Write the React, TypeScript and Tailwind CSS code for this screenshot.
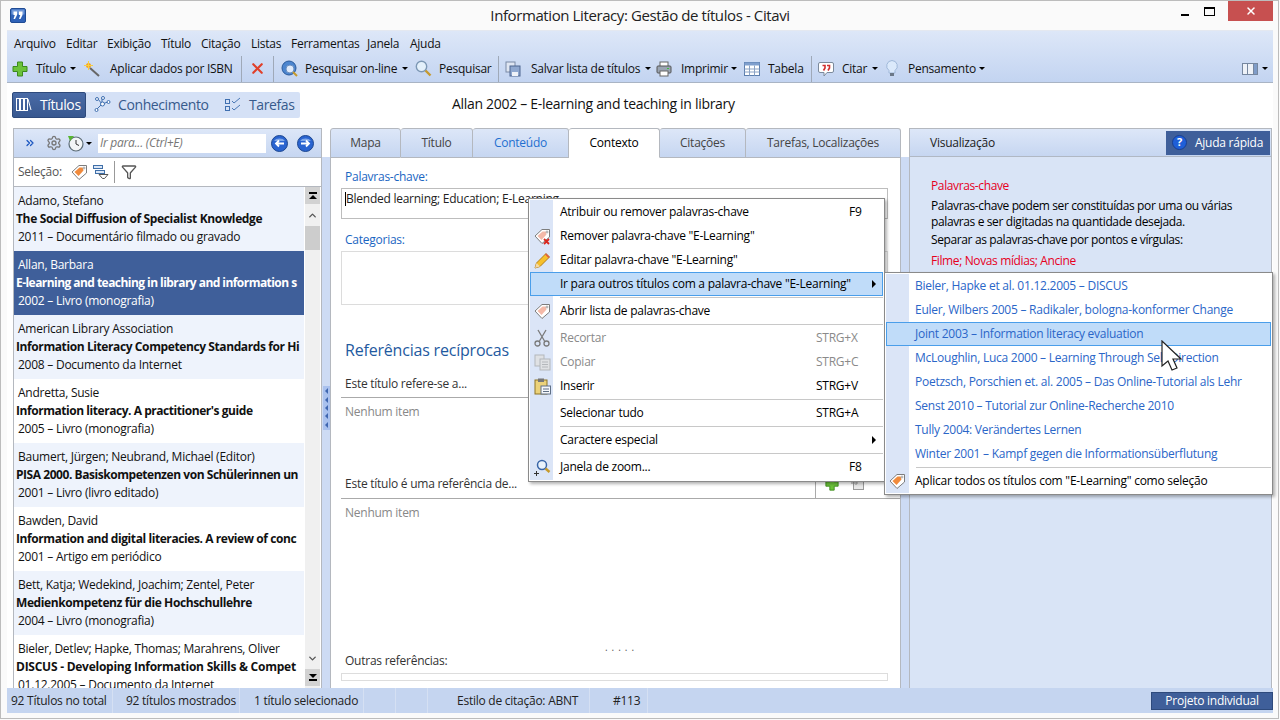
import { ChevronDown, ChevronUp, ChevronsRight, Settings, Filter, X } from 'lucide-react';

const font = '[font-family:"Open_Sans","Liberation_Sans",sans-serif]';

function Arrow() {
  return <span className="block w-0 h-0 border-l-[3px] border-r-[3px] border-t-[3px] border-l-transparent border-r-transparent border-t-black" />;
}

function PlusIcon({ size = 16 }: { size?: number }) {
  return (
    <svg width={size} height={size} viewBox="0 0 16 16">
      <path d="M5.5 1h5v4.5H15v5h-4.5V15h-5v-4.5H1v-5h4.500z" fill="#6cc23a" stroke="#3c8a1c" />
    </svg>
  );
}

function Wand() {
  return (
    <svg width="16" height="16" viewBox="0 0 16 16">
      <path d="M6 7l9 8" stroke="#666" strokeWidth="2" />
      <circle cx="4.500" cy="4.500" r="2.500" fill="#f7a020" />
      <path d="M4.500 0v9M0 4.500h9" stroke="#f8d040" />
    </svg>
  );
}

function Globe() {
  return (
    <svg width="17" height="17" viewBox="0 0 17 17">
      <circle cx="8" cy="8" r="7" fill="#4d86cf" stroke="#2a5a9c" />
      <circle cx="9" cy="9" r="4" fill="#dfeafa" stroke="#6b8fbf" />
      <path d="M12 12l4 4" stroke="#c79a2a" strokeWidth="2" />
    </svg>
  );
}

function Magnifier() {
  return (
    <svg width="17" height="17" viewBox="0 0 17 17">
      <circle cx="6.500" cy="6.500" r="5.200" fill="#e3f0fb" stroke="#7d98b5" strokeWidth="1.400" />
      <path d="M10.500 10.500l5 5" stroke="#c69a30" strokeWidth="2.400" />
    </svg>
  );
}

function SaveIcon() {
  return (
    <svg width="16" height="16" viewBox="0 0 16 16">
      <rect x="1" y="1" width="9" height="10" fill="#dfe6f2" stroke="#7a8aa5" />
      <rect x="5" y="5" width="10" height="10" fill="#8fa8d0" stroke="#4e6690" />
      <rect x="7" y="11" width="6" height="4" fill="#eef2f8" />
    </svg>
  );
}

function PrintIcon() {
  return (
    <svg width="16" height="16" viewBox="0 0 16 16">
      <rect x="4" y="1" width="8" height="5" fill="#fff" stroke="#666" />
      <rect x="1" y="5" width="14" height="7" rx="1" fill="#9aa5b3" stroke="#555" />
      <rect x="4" y="10" width="8" height="5" fill="#fff" stroke="#666" />
      <rect x="11" y="7" width="2" height="1" fill="#3fbf3f" />
    </svg>
  );
}

function TableIcon() {
  return (
    <svg width="16" height="16" viewBox="0 0 16 16">
      <rect x="0.500" y="1.500" width="15" height="13" fill="#fff" stroke="#5d7fae" />
      <rect x="0.500" y="1.500" width="15" height="3" fill="#7f9fcd" />
      <path d="M5.500 4.500v10M10.500 4.500v10M.5 8h15M.5 11h15" stroke="#8aa2c4" />
    </svg>
  );
}

function QuoteIcon() {
  return (
    <svg width="16" height="16" viewBox="0 0 16 16">
      <path d="M2 1.500h12a1.500 1.500 0 0 1 1.500 1.500v7a1.500 1.500 0 0 1-1.500 1.500H9L6 15v-3.500H2A1.500 1.500 0 0 1 .5 10V3A1.500 1.500 0 0 1 2 1.500z" fill="#fff" stroke="#7c8a9c" />
      <path d="M4.500 4.500h2.500v2.500L5.500 9.500M9 4.500h2.500v2.500L10 9.500" fill="none" stroke="#d12f2f" strokeWidth="1.600" />
    </svg>
  );
}

function Bulb() {
  return (
    <svg width="12" height="17" viewBox="0 0 12 17">
      <path d="M6 .5a5.500 5.500 0 0 1 3 10v2.500H3v-2.500A5.500 5.500 0 0 1 6 .5z" fill="#dbe9fb" stroke="#9fb7d8" />
      <rect x="4" y="13" width="4" height="3" fill="#6c7888" />
    </svg>
  );
}

function TagIcon({ badge }: { badge?: 'x' | 'arrow' }) {
  return (
    <svg width="17" height="17" viewBox="0 0 17 17">
      <path d="M1 8l7-6.500h7.500v7.500L8 15.500z" fill="#fff" stroke="#7d7d7d" />
      <path d="M3.500 8l5-4.500h3l1 3-5 5.500z" fill={badge === 'arrow' ? '#f08a3c' : '#f4b9a8'} />
      <circle cx="13" cy="4" r="1" fill="#fff" stroke="#777" strokeWidth="0.600" />
      {badge === 'x' && <path d="M10 11l5 5M15 11l-5 5" stroke="#d9261c" strokeWidth="1.800" />}
    </svg>
  );
}

function Pencil() {
  return (
    <svg width="17" height="17" viewBox="0 0 17 17">
      <path d="M1 16l1.500-5L12 1.500 15.500 5 6 14.500z" fill="#f6c02c" stroke="#b57d14" />
      <path d="M1 16l1.500-5 3.500 3.500z" fill="#f3d9a8" />
      <path d="M11 2.500L14.500 6l1-1-3.500-3.500z" fill="#e0574a" />
    </svg>
  );
}

function Scissors() {
  return (
    <svg width="16" height="18" viewBox="0 0 16 18" fill="none" stroke="#7a7a7a" strokeWidth="1.300">
      <path d="M4 1l6.500 11M12 1L5.500 12" />
      <circle cx="3.500" cy="14.500" r="2.500" />
      <circle cx="12.500" cy="14.500" r="2.500" />
    </svg>
  );
}

function CopyIcon() {
  return (
    <svg width="17" height="17" viewBox="0 0 17 17" fill="#dfe1e4" stroke="#b4b7bb">
      <rect x="1" y="1" width="9" height="11" />
      <rect x="6" y="5" width="10" height="11" />
      <path d="M8 8h6M8 10.500h6M8 13h6" fill="none" />
    </svg>
  );
}

function PasteIcon() {
  return (
    <svg width="17" height="17" viewBox="0 0 17 17">
      <rect x="1" y="2" width="12" height="14" fill="#ecd27a" stroke="#8e7425" />
      <rect x="4" y="0.500" width="6" height="3.500" fill="#777" />
      <rect x="7" y="8" width="9.500" height="8" fill="#f5f7fa" stroke="#5f6f85" />
      <path d="M9 11h6M9 13.500h6" stroke="#5f6f85" />
    </svg>
  );
}

function ZoomIcon() {
  return (
    <svg width="17" height="17" viewBox="0 0 17 17">
      <circle cx="8" cy="6" r="4.500" fill="#eaf3fc" stroke="#3a66a8" strokeWidth="1.500" />
      <path d="M11.500 9.500l4 3.500" stroke="#c79a2a" strokeWidth="2.400" />
      <path d="M0 14.500h5M2.500 12v5" stroke="#333" />
    </svg>
  );
}

function NavCircle({ dir }: { dir: 'left' | 'right' }) {
  return (
    <svg width="17" height="17" viewBox="0 0 17 17">
      <circle cx="8.500" cy="8.500" r="8" fill="#2a64d0" stroke="#1d478f" />
      <path d="M3 6a6 4 0 0 1 11 0z" fill="#7fa8ea" />
      <path d={dir === 'left' ? 'M13 8.500H5M8 5.500l-3 3 3 3' : 'M4 8.500h8M9 5.500l3 3-3 3'} fill="none" stroke="#fff" strokeWidth="1.800" />
    </svg>
  );
}

function ClockIcon() {
  return (
    <svg width="17" height="17" viewBox="0 0 17 17">
      <circle cx="9" cy="9" r="7" fill="#f2f5f7" stroke="#5c6c76" strokeWidth="1.200" />
      <path d="M9 5v4l3 1.500" fill="none" stroke="#333" />
      <path d="M1 1h6L3 6z" fill="#57b530" />
    </svg>
  );
}

function BooksIcon() {
  return (
    <svg width="16" height="15" viewBox="0 0 16 15" fill="none" stroke="#fff">
      <rect x="0.500" y="1.500" width="3" height="12" />
      <rect x="4.500" y="1.500" width="3" height="12" />
      <rect x="8.500" y="1.500" width="3" height="12" />
      <path d="M12 2l3 11" />
    </svg>
  );
}

function KnowledgeIcon() {
  return (
    <svg width="17" height="17" viewBox="0 0 17 17" fill="#fff" stroke="#3f6fb0">
      <path d="M3 13l5-5M8 8l-4-5M8 8l6-2M8 2l0 6" fill="none" />
      <circle cx="8.500" cy="8" r="2" />
      <circle cx="2.500" cy="14" r="1.500" />
      <circle cx="3" cy="3" r="1.500" />
      <circle cx="14.500" cy="6" r="1.500" />
      <circle cx="9" cy="2" r="1.500" />
    </svg>
  );
}

function TasksIcon() {
  return (
    <svg width="17" height="15" viewBox="0 0 17 15" fill="none" stroke="#3f6fb0">
      <rect x="0.500" y="2.500" width="4" height="4" />
      <rect x="0.500" y="9.500" width="4" height="4" />
      <path d="M7 4l2 2 6-5M7 11l2 2 6-5" stroke="#4a78b5" />
    </svg>
  );
}

function AppLogo() {
  return (
    <svg width="16" height="15" viewBox="0 0 16 15">
      <rect x="0.500" y="0.500" width="15" height="14" rx="1.500" fill="#2f62b8" stroke="#1f4b94" />
      <rect x="1.500" y="1.500" width="13" height="5" fill="#6f97d8" />
      <path d="M3.500 3.500h3.500v3.500L5 11H3.500L4.800 7H3.500zM9 3.500h3.500v3.500L10.500 11H9l1.300-4H9z" fill="#fff" />
    </svg>
  );
}

type Tool = { icon: React.ReactNode; box: string; slot: string; label: string; labelBox: string; arrow?: boolean };

const tools: (Tool | 'sep')[] = [
  { icon: <PlusIcon />, box: 'w-[77px] pl-[5px]', slot: 'w-[24px]', label: 'Título', labelBox: 'w-[34px]', arrow: true },
  { icon: <Wand />, box: 'w-[157px]', slot: 'w-[26px]', label: 'Aplicar dados por ISBN', labelBox: 'w-[125px]' },
  'sep',
  { icon: <X className="w-[17px] h-[17px] text-[#e0402a]" strokeWidth={3} />, box: 'w-[31px] pl-[7px]', slot: 'w-[17px]', label: '', labelBox: 'w-0' },
  'sep',
  { icon: <Globe />, box: 'w-[141px] pl-[7px]', slot: 'w-[24px]', label: 'Pesquisar on-line', labelBox: 'w-[97px]', arrow: true },
  { icon: <Magnifier />, box: 'w-[83px]', slot: 'w-[24px]', label: 'Pesquisar', labelBox: 'w-[55px]' },
  'sep',
  { icon: <SaveIcon />, box: 'w-[157px] pl-[6px]', slot: 'w-[26px]', label: 'Salvar lista de títulos', labelBox: 'w-[114px]', arrow: true },
  { icon: <PrintIcon />, box: 'w-[88px]', slot: 'w-[25px]', label: 'Imprimir', labelBox: 'w-[50px]', arrow: true },
  { icon: <TableIcon />, box: 'w-[67px]', slot: 'w-[24px]', label: 'Tabela', labelBox: 'w-[38px]' },
  'sep',
  { icon: <QuoteIcon />, box: 'w-[74px] pl-[6px]', slot: 'w-[24px]', label: 'Citar', labelBox: 'w-[30px]', arrow: true },
  { icon: <Bulb />, box: 'w-[105px]', slot: 'w-[22px]', label: 'Pensamento', labelBox: 'w-[71px]', arrow: true },
];

const menus = [
  ['Arquivo', 'w-[52px]'],
  ['Editar', 'w-[41px]'],
  ['Exibição', 'w-[54px]'],
  ['Título', 'w-[40px]'],
  ['Citação', 'w-[50px]'],
  ['Listas', 'w-[40px]'],
  ['Ferramentas', 'w-[76px]'],
  ['Janela', 'w-[43px]'],
  ['Ajuda', 'w-[40px]'],
];

// the list cuts long titles at the column edge, so the strings stop where the picture stops
const refs = [
  ['Adamo, Stefano', 'The Social Diffusion of Specialist Knowledge', '2011 – Documentário filmado ou gravado', 'bg-[#eef3fc]', 'tracking-[-0.35px]'],
  ['Allan, Barbara', 'E-learning and teaching in library and information s', '2002 – Livro (monografia)', 'bg-[#3f5f9a] text-white', 'tracking-[-0.55px]'],
  ['American Library Association', 'Information Literacy Competency Standards for Hi', '2008 – Documento da Internet', 'bg-[#eef3fc]', 'tracking-[-0.4px]'],
  ['Andretta, Susie', "Information literacy. A practitioner's guide", '2005 – Livro (monografia)', 'bg-white', 'tracking-[-0.45px]'],
  ['Baumert, Jürgen; Neubrand, Michael (Editor)', 'PISA 2000. Basiskompetenzen von Schülerinnen un', '2001 – Livro (livro editado)', 'bg-[#eef3fc]', 'tracking-[-0.45px]'],
  ['Bawden, David', 'Information and digital literacies. A review of conc', '2001 – Artigo em periódico', 'bg-white', 'tracking-[-0.42px]'],
  ['Bett, Katja; Wedekind, Joachim; Zentel, Peter', 'Medienkompetenz für die Hochschullehre', '2004 – Livro (monografia)', 'bg-[#eef3fc]', 'tracking-[-0.4px]'],
  ['Bieler, Detlev; Hapke, Thomas; Marahrens, Oliver', 'DISCUS - Developing Information Skills & Compet', '01.12.2005 – Documento da Internet', 'bg-white', 'tracking-[-0.25px]'],
];

const tabs = [
  ['Mapa', 'w-[71px] text-[#444]'],
  ['Título', 'w-[72px] text-[#444]'],
  ['Conteúdo', 'w-[96px] text-[#1f6fd0]'],
  ['Contexto', 'w-[91px] bg-white bg-none border-b-white text-black'],
  ['Citações', 'w-[86px] text-[#444]'],
  ['Tarefas, Localizações', 'w-[155px] text-[#444]'],
];

const subItems = [
  'Bieler, Hapke et al. 01.12.2005 – DISCUS',
  'Euler, Wilbers 2005 – Radikaler, bologna-konformer Change',
  'Joint 2003 – Information literacy evaluation',
  'McLoughlin, Luca 2000 – Learning Through Self-Direction',
  'Poetzsch, Porschien et. al. 2005 – Das Online-Tutorial als Lehr',
  'Senst 2010 – Tutorial zur Online-Recherche 2010',
  'Tully 2004: Verändertes Lernen',
  'Winter 2001 – Kampf gegen die Informationsüberflutung',
];

function MenuRow({ icon, label, keys, muted, active, submenu }: { icon?: React.ReactNode; label: string; keys?: string; muted?: boolean; active?: boolean; submenu?: boolean }) {
  return (
    <div className={`relative flex items-center h-[24px] ${muted ? 'text-[#8a8a8a]' : 'text-black'}`}>
      {active && <div className="absolute left-0 right-0 top-0 bottom-0 bg-[#c0dcf9] border border-[#4a9eea]" />}
      <div className="relative w-[22px] ml-[1px] h-full flex items-center justify-center shrink-0">{icon}</div>
      <span className="relative ml-[7px] grow">{label}</span>
      {keys && <span className={`relative w-[71px] shrink-0 ${keys.length > 2 ? 'pl-[4px]' : 'pl-[37px]'}`}>{keys}</span>}
      {submenu && <span className="relative mr-[7px] block w-0 h-0 border-t-[4px] border-b-[4px] border-l-[4px] border-t-transparent border-b-transparent border-l-black" />}
    </div>
  );
}

function MenuSep() {
  return (
    <div className="h-[3px] flex items-center">
      <div className="ml-[30px] grow h-px bg-[#c8c8c8]" />
    </div>
  );
}

export default function App() {
  return (
    <div className="w-[1280px] h-[720px] bg-[#fafafa] overflow-hidden">
      <div className={`${font} relative w-[1279px] h-[719px] overflow-hidden bg-[#fafafa] text-[12px] tracking-[-0.25px] text-[#111] flex flex-col border border-[#bcbcbc]`}>
        {/* title bar */}
        <div className="h-[29px] shrink-0 flex items-start">
          <div className="ml-[9px] mt-[7px]"><AppLogo /></div>
          <div className="grow text-center text-[15px] tracking-[-0.4px] mt-[3px] ml-[86px] text-[#222]">Information Literacy: Gestão de títulos - Citavi</div>
          <div className="w-[33px] h-[20px] flex items-center justify-center"><div className="w-[8px] h-[2px] mt-[7px] bg-black" /></div>
          <div className="w-[27px] h-[20px] flex items-center"><div className="w-[11px] h-[9px] ml-[3px] border border-black border-t-2" /></div>
          <div className="w-[45px] h-[20px] bg-[#c75050] flex items-center justify-center"><X className="w-[12px] h-[12px] text-white" strokeWidth={3} /></div>
          <div className="w-[5px] h-full" />
        </div>

        <div className="ml-[6px] w-[1266px] flex flex-col">
          {/* menu and toolbar */}
          <div className="h-[53px] shrink-0 bg-gradient-to-b from-[#dde7f8] to-[#c3d4f1] border-b border-[#a9b4c4] border-t border-t-[#e4e8f0] flex flex-col">
            <div className="h-[24px] flex items-center pl-[7px] pt-[1px]">
              {menus.map(([name, w]) => (
                <span key={name} className={`${w} shrink-0`}>{name}</span>
              ))}
            </div>
            <div className="h-[27px] flex items-center">
              {tools.map((t, i) =>
                t === 'sep' ? (
                  <div key={i} className="w-px h-[26px] bg-[#9fa9b8] shrink-0" />
                ) : (
                  <div key={i} className={`${t.box} shrink-0 flex items-center`}>
                    <div className={`${t.slot} shrink-0`}>{t.icon}</div>
                    <span className={`${t.labelBox} shrink-0 whitespace-nowrap pt-[1px]`}>{t.label}</span>
                    {t.arrow && <Arrow />}
                  </div>
                ),
              )}
              <div className="ml-auto flex items-center gap-[4px] pr-[5px]">
                <svg width="16" height="12" viewBox="0 0 16 12" fill="#eef2f8" stroke="#76879f">
                  <rect x="0.500" y="0.500" width="15" height="11" />
                  <path d="M5.500 0v12M11.500 0v12" />
                  <rect x="11.500" y="0.500" width="4" height="11" fill="#7f9cc8" />
                </svg>
                <Arrow />
              </div>
            </div>
          </div>

          {/* view switcher */}
          <div className="h-[45px] shrink-0 bg-white flex items-center pl-[5px] pb-[2px]">
            <div className="w-[288px] h-[26px] bg-[#d5e1f6] rounded-[2px] flex items-center text-[14px] leading-[20px] tracking-[-0.4px] text-[#375a8c]">
              <div className="w-[74px] h-full bg-gradient-to-b from-[#4a6ba6] to-[#385890] rounded-[2px] border border-[#2e4a7c] text-white flex items-center pl-[3px] gap-[8px]">
                <BooksIcon />
                <span>Títulos</span>
              </div>
              <div className="ml-[8px] w-[131px] flex items-center gap-[7px]"><KnowledgeIcon /><span>Conhecimento</span></div>
              <div className="flex items-center gap-[7px]"><TasksIcon /><span>Tarefas</span></div>
            </div>
            <div className="ml-[152px] mb-[1px] text-[14px] leading-[20px] tracking-[-0.3px] text-[#111]">Allan 2002 – E-learning and teaching in library</div>
          </div>

          {/* panels */}
          <div className="flex shrink-0 bg-white pl-[6px] h-[560px]">
            {/* left panel */}
            <div className="w-[309px] shrink-0 flex flex-col border border-[#b4b8bf] border-b-0 overflow-hidden">
              <div className="h-[29px] shrink-0 bg-gradient-to-b from-[#dde7f8] to-[#c6d6f1] border-b border-[#b0b8c4] flex items-center pl-[10px]">
                <ChevronsRight className="w-[12px] h-[12px] text-[#1c57c0]" strokeWidth={2.5} />
                <Settings className="ml-[10px] w-[16px] h-[16px] text-[#777]" />
                <span className="ml-[5px]"><ClockIcon /></span>
                <span className="ml-[2px]"><Arrow /></span>
                <div className="ml-[6px] w-[168px] h-[19px] bg-white flex items-center pl-[2px] text-[#777] italic">Ir para... (Ctrl+E)</div>
                <span className="ml-[5px]"><NavCircle dir="left" /></span>
                <span className="ml-[9px]"><NavCircle dir="right" /></span>
              </div>
              <div className="h-[29px] shrink-0 bg-white border-b border-[#b4b8bf] flex items-center pl-[4px] text-[#555]">
                <span className="w-[53px]">Seleção:</span>
                <TagIcon badge="arrow" />
                <span className="ml-[5px]">
                  <svg width="16" height="16" viewBox="0 0 16 16" fill="#dbe7f7" stroke="#3f6fa8">
                    <rect x="0.500" y="1.500" width="9" height="3" />
                    <rect x="2.500" y="6.500" width="9" height="3" />
                    <path d="M6 10.500h9l-3.500 4h-2z" fill="#fff" stroke="#555" />
                  </svg>
                </span>
                <div className="ml-[5px] w-px h-[22px] bg-[#999]" />
                <Filter className="ml-[6px] w-[16px] h-[16px] text-[#555]" />
              </div>
              <div className="flex grow min-h-0">
                <div className="w-[290px] shrink-0 overflow-hidden">
                  {refs.map(([author, title, meta, cls, track]) => (
                    <div key={author} className={`${cls} h-[64px] pt-[5px] leading-[18px] whitespace-nowrap overflow-hidden`}>
                      <div className="pl-[4px]">{author}</div>
                      <div className={`pl-[2px] font-bold ${track}`}>{title}</div>
                      <div className="pl-[4px]">{meta}</div>
                    </div>
                  ))}
                </div>
                <div className="w-[15px] ml-[1px] shrink-0 bg-[#f0f0f0] flex flex-col items-center">
                  <div className="w-full h-[17px] bg-[#d2d2d2] flex flex-col items-center justify-center gap-[1px]">
                    <div className="w-[8px] h-[2px] bg-black" />
                    <div className="w-0 h-0 border-l-[4px] border-r-[4px] border-b-[4px] border-l-transparent border-r-transparent border-b-black" />
                  </div>
                  <div className="h-[22px] flex items-center"><ChevronUp className="w-[11px] h-[11px] text-[#555]" strokeWidth={3} /></div>
                  <div className="w-full h-[24px] bg-[#cdcdcd]" />
                  <div className="mt-auto h-[21px] flex items-center"><ChevronDown className="w-[11px] h-[11px] text-[#555]" strokeWidth={3} /></div>
                  <div className="w-full h-[17px] bg-[#d2d2d2] flex flex-col items-center justify-center gap-[1px] mb-[2px]">
                    <div className="w-0 h-0 border-l-[4px] border-r-[4px] border-t-[4px] border-l-transparent border-r-transparent border-t-black" />
                    <div className="w-[8px] h-[2px] bg-black" />
                  </div>
                </div>
              </div>
            </div>

            {/* splitter */}
            <div className="w-[8px] mt-[29px] shrink-0 bg-[#cddbf4] flex flex-col items-center">
              <div className="mt-[229px] w-[7px] h-[44px] bg-[#a9c1ee] flex flex-col items-center justify-around py-[1px]">
                {[0, 1, 2, 3, 4].map((n) => (
                  <div key={n} className="w-0 h-0 border-t-[3px] border-b-[3px] border-r-[3px] border-t-transparent border-b-transparent border-r-[#3f66b0]" />
                ))}
              </div>
            </div>

            {/* main panel */}
            <div className="w-[571px] shrink-0 flex flex-col">
              <div className="h-[29px] shrink-0 flex">
                {tabs.map(([name, cls]) => (
                  <div key={name} className={`${cls} h-[30px] shrink-0 flex items-center justify-center bg-gradient-to-b from-[#dde7f8] to-[#c6d6f1] border border-l-0 first:border-l border-[#b4b8bf] rounded-t-[3px] z-10`}>{name}</div>
                ))}
              </div>
              <div className="grow bg-white border-x border-[#b4b8bf] relative flex flex-col pl-[10px] pr-[12px] min-h-0">
                <div className="pl-[4px] mt-[11px] h-[20px] text-[#1a66c2]">Palavras-chave:</div>
                <div className="h-[31px] border border-[#bdbdbd] flex items-start pt-[1px] pl-[3px] text-[#222]">
                  <span className="w-px h-[14px] mt-[2px] bg-black" />
                  Blended learning; Education; E-Learning
                </div>
                <div className="pl-[4px] mt-[12px] h-[20px] text-[#1a66c2]">Categorias:</div>
                <div className="h-[54px] border border-[#dcdcdc]" />
                <div className="pl-[4px] mt-[33px] h-[24px] text-[16px] leading-[24px] tracking-[-0.2px] text-[#1f5aa0]">Referências recíprocas</div>
                <div className="pl-[4px] mt-[13px] h-[23px] text-[#333] border-b border-[#aaa] -mr-[12px]">Este título refere-se a...</div>
                <div className="pl-[4px] mt-[5px] h-[72px] text-[#888]">Nenhum item</div>
                <div className="flex h-[24px] border-b border-[#aaa] text-[#333] -mr-[12px]">
                  <div className="pl-[4px] w-[475px] border-r border-[#aaa]">Este título é uma referência de...</div>
                  <span className="ml-[9px] mt-[2px]"><PlusIcon size={14} /></span>
                  <span className="ml-[12px] mt-[2px]">
                    <svg width="14" height="14" viewBox="0 0 14 14" fill="#e8e8e8" stroke="#9a9a9a">
                      <rect x="2.500" y="1.500" width="10" height="11" />
                      <path d="M0 6h6M4.500 4l2 2-2 2" fill="none" />
                    </svg>
                  </span>
                </div>
                <div className="pl-[4px] mt-[5px] text-[#888]">Nenhum item</div>
                <div className="mt-auto text-center text-[10px] leading-[10px] tracking-[4px] text-[#555] pl-[14px]">.....</div>
                <div className="pl-[4px] h-[20px] text-[#333]">Outras referências:</div>
                <div className="h-[8px] mt-[1px] mb-[7px] border border-[#ddd]" />
              </div>
            </div>

            {/* splitter */}
            <div className="w-[8px] mt-[29px] shrink-0 bg-[#cddbf4]" />

            {/* help panel */}
            <div className="w-[363px] shrink-0 bg-[#d9e4f6] border-x border-t border-[#b4b8bf] flex flex-col">
              <div className="h-[28px] shrink-0 bg-gradient-to-b from-[#dde7f8] to-[#c6d6f1] border-b border-[#b0b8c4] flex items-center pl-[20px]">
                <span className="text-[#222]">Visualização</span>
                <div className="ml-auto mr-[1px] w-[104px] h-[24px] bg-[#3f5f9a] text-white flex items-center pl-[6px] gap-[8px]">
                  <span className="w-[15px] h-[15px] rounded-full bg-[#1f5fd8] border border-[#1a3f8f] text-[11px] font-bold flex items-center justify-center">?</span>
                  <span>Ajuda rápida</span>
                </div>
              </div>
              <div className="pl-[21px] pt-[21px] leading-[16px] tracking-[-0.38px] text-black">
                <div className="text-[#e6001e] h-[20px]">Palavras-chave</div>
                <div className="h-[34px]">Palavras-chave podem ser constituídas por uma ou várias<br />palavras e ser digitadas na quantidade desejada.</div>
                <div className="h-[21px]">Separar as palavras-chave por pontos e vírgulas:</div>
                <div className="text-[#e6001e]">Filme; Novas mídias; Ancine</div>
              </div>
            </div>
          </div>

          {/* status bar */}
          <div className="h-[25px] shrink-0 bg-[#c5d5f0] flex items-center text-[#222] relative">
            <span className="w-[106px] pl-[4px] h-full flex items-center border-r border-[#d5e0f3] whitespace-nowrap">92 Títulos no total</span>
            <span className="w-[127px] pl-[13px] h-full flex items-center border-r border-[#d5e0f3] whitespace-nowrap">92 títulos mostrados</span>
            <span className="w-[124px] pl-[14px] h-full flex items-center border-r border-[#d5e0f3] whitespace-nowrap">1 título selecionado</span>
            <span className="w-[32px] h-full border-r border-[#d5e0f3]" />
            <span className="w-[32px] h-full border-r border-[#d5e0f3]" />
            <span className="w-[162px] pl-[29px] h-full flex items-center border-r border-[#d5e0f3] whitespace-nowrap">Estilo de citação: ABNT</span>
            <span className="w-[58px] pl-[23px] h-full flex items-center border-r border-[#d5e0f3]">#113</span>
            <div className="ml-auto w-[122px] h-[18px] bg-[#3f5f9a] border border-[#2e4a7c] text-white flex items-center justify-center">Projeto individual</div>
          </div>
        </div>

        {/* context menu */}
        <div className="absolute left-[527px] top-[197px] w-[357px] h-[284px] bg-white border border-[#8a8a8a] shadow-[2px_2px_3px_rgba(0,0,0,0.3)] p-[1px] text-black z-20">
          <div className="absolute left-[1px] top-[1px] bottom-[1px] w-[23px] bg-[#dbe5f7]" />
          <div className="relative">
            <MenuRow label="Atribuir ou remover palavras-chave" keys="F9" />
            <MenuRow icon={<TagIcon badge="x" />} label={'Remover palavra-chave "E-Learning"'} />
            <MenuRow icon={<Pencil />} label={'Editar palavra-chave "E-Learning"'} />
            <MenuRow label={'Ir para outros títulos com a palavra-chave "E-Learning"'} active submenu />
            <MenuSep />
            <MenuRow icon={<TagIcon />} label="Abrir lista de palavras-chave" />
            <MenuSep />
            <MenuRow icon={<Scissors />} label="Recortar" keys="STRG+X" muted />
            <MenuRow icon={<CopyIcon />} label="Copiar" keys="STRG+C" muted />
            <MenuRow icon={<PasteIcon />} label="Inserir" keys="STRG+V" />
            <MenuSep />
            <MenuRow label="Selecionar tudo" keys="STRG+A" />
            <MenuSep />
            <MenuRow label="Caractere especial" submenu />
            <MenuSep />
            <MenuRow icon={<ZoomIcon />} label="Janela de zoom..." keys="F8" />
          </div>
        </div>

        {/* submenu */}
        <div className="absolute left-[883px] top-[271px] w-[389px] h-[223px] bg-white border border-[#8a8a8a] shadow-[2px_2px_3px_rgba(0,0,0,0.3)] p-[1px] text-black z-30">
          <div className="absolute left-[1px] top-[1px] bottom-[1px] w-[23px] bg-[#dbe5f7]" />
          <div className="relative">
            {subItems.map((s, i) => (
              <div key={s} className={`h-[24px] flex items-center text-[#2a66c8] whitespace-nowrap ${i === 2 ? 'bg-[#c0dcf9] border border-[#4a9eea] pl-[28px]' : 'pl-[29px]'}`}>{s}</div>
            ))}
            <MenuSep />
            <div className="h-[24px] flex items-center">
              <div className="w-[23px] flex justify-center"><TagIcon badge="arrow" /></div>
              <span className="ml-[6px]">Aplicar todos os títulos com "E-Learning" como seleção</span>
            </div>
          </div>
        </div>

        {/* mouse cursor */}
        <svg className="absolute left-[1160px] top-[339px] z-40" width="24" height="32" viewBox="0 0 24 32">
          <path d="M1 1v25l6-5 4 9 5-2-4-9h8z" fill="#fff" stroke="#222" strokeWidth="1.200" />
        </svg>
      </div>
    </div>
  );
}
